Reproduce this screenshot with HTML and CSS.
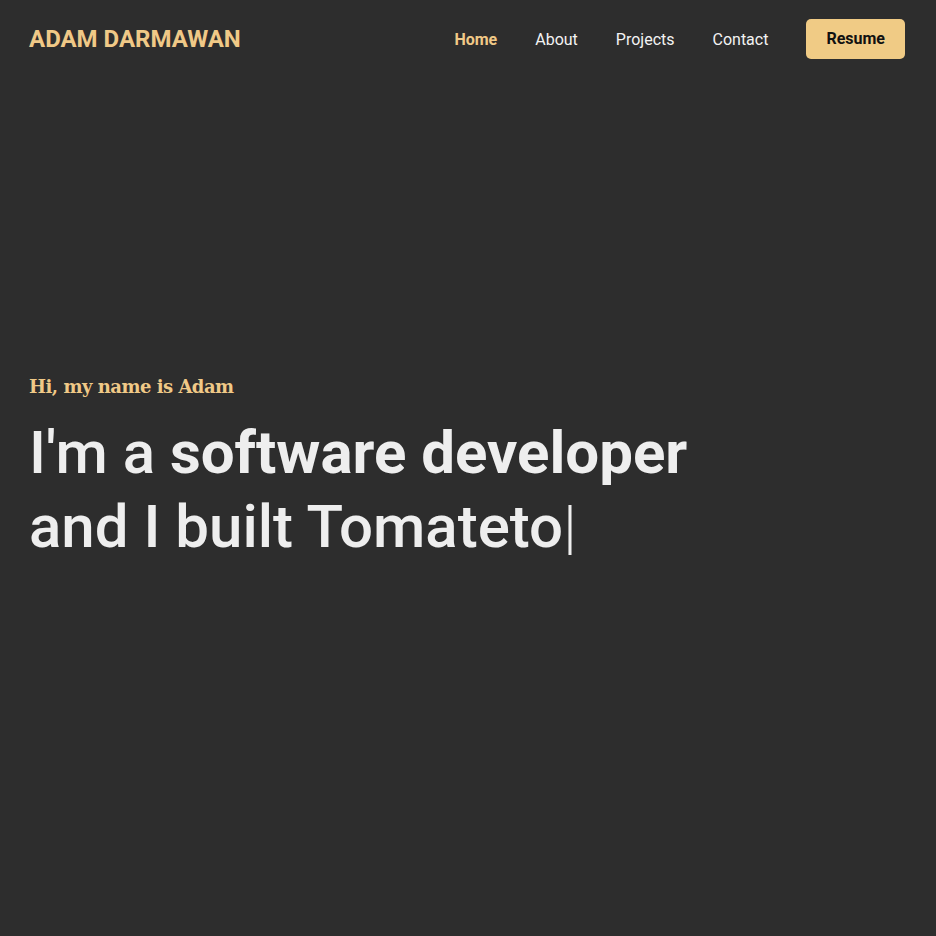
FILE: index.html
```html
<!DOCTYPE html>
<html>
<head>
<meta charset="utf-8">
<link rel="stylesheet" href="styles.css">
</head>
<body>
<header class="nav">
  <div class="logo">ADAM DARMAWAN</div>
  <nav class="links">
    <a class="link active">Home</a>
    <a class="link">About</a>
    <a class="link">Projects</a>
    <a class="link">Contact</a>
    <a class="resume">Resume</a>
  </nav>
</header>
<main class="hero">
  <p class="greet">Hi, my name is Adam</p>
  <h1 class="title">I'm a <strong>software developer</strong><br>and I built Tomateto<span class="cursor">|</span></h1>
</main>
</body>
</html>
```
FILE: styles.css
```css
html, body {
  margin: 0;
  padding: 0;
  background: #2d2d2d;
  height: 100%;
}
body {
  font-family: Roboto, "Noto Sans", sans-serif;
  color: #eeeeee;
  display: flex;
  flex-direction: column;
}
.nav {
  display: flex;
  align-items: center;
  justify-content: space-between;
  padding: 19px 31px 0 29px;
  height: 40px;
}
.logo {
  font-weight: 700;
  font-size: 24px;
  color: #f0c987;
  letter-spacing: 0;
}
.links {
  display: flex;
  align-items: center;
}
.link {
  font-size: 16px;
  color: #f3f3f3;
  margin-right: 38px;
}
.link.active {
  color: #f0c987;
  font-weight: 700;
}
.resume {
  background: #f0cb85;
  color: #111;
  font-weight: 700;
  font-size: 16px;
  border-radius: 5px;
  padding: 0 20px;
  height: 40px;
  line-height: 40px;
}
.hero {
  flex: 1;
  display: flex;
  flex-direction: column;
  justify-content: center;
  padding: 0 29px 56px;
}
.greet {
  margin: 0 0 19px;
  font-family: "DejaVu Serif", serif;
  font-weight: 700;
  font-size: 18px;
  letter-spacing: -0.5px;
  color: #f0c987;
}
.title {
  margin: 0;
  font-size: 60px;
  line-height: 74px;
  font-weight: 500;
  color: #eeeeee;
}
.title strong {
  font-weight: 700;
}
.cursor {
  font-weight: 300;
}
```
